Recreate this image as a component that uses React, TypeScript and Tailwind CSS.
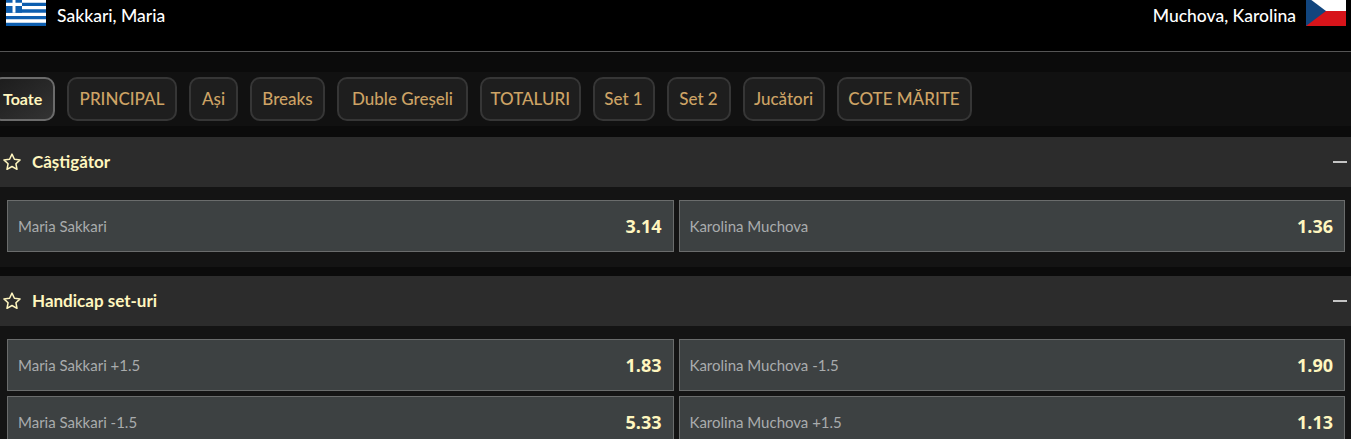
const tabs = [
  { label: "PRINCIPAL", width: "w-[110px]" },
  { label: "Ași", width: "w-[49px]" },
  { label: "Breaks", width: "w-[75px]" },
  { label: "Duble Greșeli", width: "w-[131px]" },
  { label: "TOTALURI", width: "w-[100.5px]" },
  { label: "Set 1", width: "w-[62px]" },
  { label: "Set 2", width: "w-[64px]" },
  { label: "Jucători", width: "w-[82px]" },
  { label: "COTE MĂRITE", width: "w-[135px]" },
];

function GreeceFlag() {
  return (
    <svg viewBox="0 0 27 18" className="h-[30px] w-[40px] shrink-0" preserveAspectRatio="none">
      <rect width="27" height="18" fill="#0d5eaf" />
      <path d="M0 3h27M0 7h27M0 11h27M0 15h27" stroke="#fff" strokeWidth="2" />
      <rect width="10.8" height="10" fill="#0d5eaf" />
      <path d="M5.4 0v10M0 5h10.8" stroke="#fff" strokeWidth="2" />
    </svg>
  );
}

function CzechFlag() {
  return (
    <svg viewBox="0 0 40 30" className="h-[30px] w-[40px] shrink-0" preserveAspectRatio="none">
      <rect width="40" height="15" fill="#fff" />
      <rect y="15" width="40" height="15" fill="#d7141a" />
      <path d="M0 0L20 15L0 30Z" fill="#11457e" />
    </svg>
  );
}

function Star() {
  return (
    <svg viewBox="0 0 24 24" className="h-[20px] w-[20px]" fill="none" stroke="#fff6bf" strokeWidth="1.8" strokeLinejoin="round">
      <path d="M12 2.5l2.9 6.2 6.8.8-5 4.6 1.3 6.7-6-3.4-6 3.4 1.3-6.7-5-4.6 6.8-.8z" />
    </svg>
  );
}

function Outcome({ name, odds }: { name: string; odds: string }) {
  return (
    <button className="flex h-[52px] items-center justify-between border border-[#6a6c6c] bg-[#3d4142] pl-[10px] pr-[11px]">
      <span className="text-[15px] leading-[20px] -mt-[1px] text-[#a9acad]">{name}</span>
      <span className="text-[18px] font-bold text-[#fff6bf] [font-family:'Open_Sans',sans-serif]">{odds}</span>
    </button>
  );
}

function Market({ title, rows }: { title: string; rows: [string, string][] }) {
  return (
    <section>
      <div className="flex h-[50px] items-center justify-between bg-[#2c2c2c] pl-[2px] pr-[4px]">
        <div className="flex items-center gap-[10px]">
          <Star />
          <span className="text-[17px] font-bold text-[#fff6bf]">{title}</span>
        </div>
        <div className="h-[2px] w-[14px] bg-[#c4c4c4]" />
      </div>
      <div className="grid grid-cols-2 gap-x-[5px] gap-y-[5px] bg-[#141414] pb-[15px] pl-[7px] pr-[6px] pt-[13px]">
        {rows.map(([name, odds]) => (
          <Outcome key={name} name={name} odds={odds} />
        ))}
      </div>
    </section>
  );
}

export default function App() {
  return (
    <div className="h-[439px] overflow-hidden bg-[#0b0b0b] [font-family:Lato,sans-serif]">
      {/* Match header */}
      <header className="flex h-[52px] items-start justify-between border-b border-[#555] bg-black pl-[6px] pr-[5px]">
        <div className="flex items-start gap-[11px]">
          <div className="-mt-[4px]"><GreeceFlag /></div>
          <span className="mt-[5px] text-[17.5px] leading-[22px] font-medium text-white">Sakkari, Maria</span>
        </div>
        <div className="flex items-start gap-[10px]">
          <span className="mt-[5px] text-[17.5px] leading-[22px] font-medium text-white">Muchova, Karolina</span>
          <div className="-mt-[4px]"><CzechFlag /></div>
        </div>
      </header>

      {/* Tabs */}
      <nav className="mt-[20px] flex h-[54px] items-center gap-[12px] bg-[#111] -ml-[8px]">
        <button className="h-[44px] w-[63px] rounded-[10px] border-2 border-[#6b6b6b] bg-gradient-to-br from-[#1c1c1c] to-[#333] pl-[9px] text-left text-[16px] font-bold text-[#fff6bf]">
          Toate
        </button>
        {tabs.map((t) => (
          <button
            key={t.label}
            className={`h-[44px] shrink-0 rounded-[10px] border-2 border-[#363636] bg-[#1e1e1e] text-center text-[17px] font-medium text-[#cda365] ${t.width}`}
          >
            {t.label}
          </button>
        ))}
      </nav>

      <main className="mt-[11px] flex flex-col gap-[9px]">
        <Market title="Câștigător" rows={[["Maria Sakkari", "3.14"], ["Karolina Muchova", "1.36"]]} />
        <Market
          title="Handicap set-uri"
          rows={[
            ["Maria Sakkari +1.5", "1.83"],
            ["Karolina Muchova -1.5", "1.90"],
            ["Maria Sakkari -1.5", "5.33"],
            ["Karolina Muchova +1.5", "1.13"],
          ]}
        />
      </main>
    </div>
  );
}
